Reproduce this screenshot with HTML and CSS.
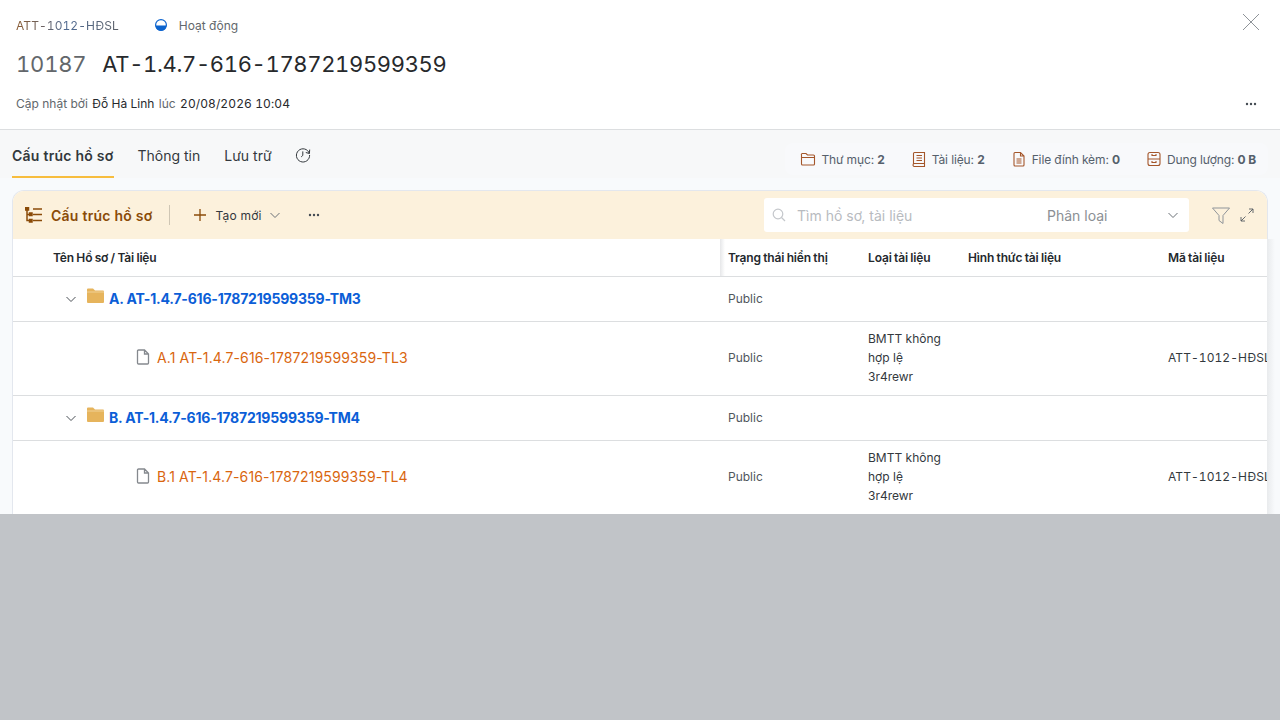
FILE: index.html
```html
<!DOCTYPE html>
<html lang="vi">
<head>
    <meta charset="UTF-8">
    <meta name="viewport" content="width=device-width, initial-scale=1.0">
    <title>AT-1.4.7-616-1787219599359</title>
    <link rel="stylesheet" href="styles.css">
</head>
<body>
    <div class="panel">
        <header class="head">
            <div class="head-top">
                <span class="code">ATT-1012-HĐSL</span>
                <span class="status">
                    <svg class="status-dot" width="12" height="12" viewBox="0 0 12 12"><circle cx="6" cy="6" r="5.4" fill="#fff" stroke="#0b63ce" stroke-width="1.2"/><path d="M.6 6.4h10.8A5.4 5.4 0 0 1 .6 6.4z" fill="#0b63ce"/></svg>
                    Hoạt động
                </span>
                <button class="close" aria-label="Đóng">
                    <svg width="18" height="18" viewBox="0 0 18 18"><path d="M1 1l16 16M17 1L1 17" stroke="#8f9499" stroke-width="1" fill="none"/></svg>
                </button>
            </div>
            <h1 class="title"><span class="title-id">10187</span><span class="title-name">AT-1.4.7-616-1787219599359</span></h1>
            <div class="head-meta">
                <p class="updated">Cập nhật bởi <b>Đỗ Hà Linh</b> lúc <b class="date">20/08/2026 10:04</b></p>
                <svg class="dots" width="12" height="4" viewBox="0 0 12 4"><g fill="#444b52"><circle cx="2" cy="2" r="1.2"/><circle cx="6" cy="2" r="1.2"/><circle cx="10" cy="2" r="1.2"/></g></svg>
            </div>
        </header>

        <section class="body">
            <div class="tabbar">
                <nav class="tabs">
                    <a href="#" class="tab active">Cấu trúc hồ sơ</a>
                    <a href="#" class="tab">Thông tin</a>
                    <a href="#" class="tab">Lưu trữ</a>
                    <a href="#" class="tab tab-icon" aria-label="Lịch sử">
                        <svg width="16" height="16" viewBox="0 0 16 16" fill="none" stroke="#33383d" stroke-width="1"><path d="M14.3 6.4A6.6 6.6 0 1 0 14.6 8M14.7 2.6l-.3 3.9-3.6-1M7.8 4.4v4l-1.6 1.5"/></svg>
                    </a>
                </nav>
                <ul class="stats">
                    <li><svg width="16" height="16" viewBox="0 0 16 16" fill="none" stroke="#a4562a" stroke-width="1.1"><path d="M1.500 4V13a1 1 0 0 0 1 1h11a1 1 0 0 0 1-1V5a1 1 0 0 0-1-1H7.500L6 2.500H2.500a1 1 0 0 0-1 1.500zM1.500 6.500h13"/></svg><span>Thư mục: <b>2</b></span></li>
                    <li><svg width="16" height="16" viewBox="0 0 16 16" fill="none" stroke="#a4562a" stroke-width="1.1"><path d="M2.500 12.500V2.500a1 1 0 0 1 1-1h10v11H3.500a1.500 1.500 0 0 0 0 3h10v-3M5.500 4.500h5.500M5.500 7h5.500M5.500 9.500h5.500"/></svg><span>Tài liệu: <b>2</b></span></li>
                    <li><svg width="16" height="16" viewBox="0 0 16 16" fill="none" stroke="#a4562a" stroke-width="1.1"><path d="M3 2.500a1 1 0 0 1 1-1h5.500L13 5v9a1 1 0 0 1-1 1H4a1 1 0 0 1-1-1zM9.500 1.500V5H13M5.500 8h5M5.500 10h5M5.500 12h5"/></svg><span>File đính kèm: <b>0</b></span></li>
                    <li><svg width="16" height="16" viewBox="0 0 16 16" fill="none" stroke="#a4562a" stroke-width="1.1"><rect x="2" y="1.500" width="12" height="13" rx="2"/><path d="M2 8h12M6 3v1.500h4V3M6 10v1.500h4V10"/></svg><span>Dung lượng: <b>0 B</b></span></li>
                </ul>
            </div>

            <div class="card">
                <div class="toolbar">
                    <svg class="tree-icon" width="18" height="16" viewBox="0 0 18 16" fill="none" stroke="#8a4b08" stroke-width="1.5"><path d="M2 1.500v12h3M2 7.500h3M8 2h9M8 7.500h9M8 13.500h9"/><rect x="4.500" y="6" width="2.500" height="2.500" fill="#8a4b08"/><rect x="4.500" y="12.500" width="2.500" height="2.500" fill="#8a4b08"/><rect x=".5" y=".5" width="3" height="2.500" fill="#8a4b08"/></svg>
                    <span class="toolbar-title">Cấu trúc hồ sơ</span>
                    <span class="divider"></span>
                    <button class="new-btn">
                        <svg width="14" height="14" viewBox="0 0 14 14"><path d="M7 1v12M1 7h12" stroke="#8a4b08" stroke-width="1.300"/></svg>
                        <span>Tạo mới</span>
                        <svg class="caret" width="12" height="12" viewBox="0 0 12 12" fill="none"><path d="M1.500 4l4.500 4.500L10.500 4" stroke="#6b7177" stroke-width="1"/></svg>
                    </button>
                    <svg class="dots" width="12" height="4" viewBox="0 0 12 4"><g fill="#444b52"><circle cx="2" cy="2" r="1.2"/><circle cx="6" cy="2" r="1.2"/><circle cx="10" cy="2" r="1.2"/></g></svg>
                    <div class="search">
                        <svg width="14" height="14" viewBox="0 0 14 14" fill="none" stroke="#c4c7cb" stroke-width="1.200"><circle cx="6" cy="6" r="4.800"/><path d="M9.500 9.500L13 13"/></svg>
                        <span class="search-text">Tìm hồ sơ, tài liệu</span>
                        <span class="search-type">Phân loại</span>
                        <svg class="search-caret" width="12" height="12" viewBox="0 0 12 12" fill="none"><path d="M1.500 4l4.500 4.500L10.500 4" stroke="#6b7177" stroke-width="1"/></svg>
                    </div>
                    <svg class="filter" width="18" height="17" viewBox="0 0 18 17" fill="none" stroke="#8f9499" stroke-width="1"><path d="M.5 1h17l-6.500 7.500v8l-4-3V8.500z"/></svg>
                    <svg class="expand" width="14" height="14" viewBox="0 0 14 14" fill="none" stroke="#555b61" stroke-width=".9"><path d="M1 13l4.500-4.500M8.500 5.500L13 1M9 1h4v4M1 9v4h4"/></svg>
                </div>

                <div class="table-wrap">
                    <table class="tree-table">
                        <colgroup>
                            <col class="col-name">
                            <col class="col-status">
                            <col class="col-type">
                            <col class="col-form">
                            <col class="col-code">
                        </colgroup>
                        <thead>
                            <tr>
                                <th class="th-name">Tên Hồ sơ / Tài liệu</th>
                                <th>Trạng thái hiển thị</th>
                                <th>Loại tài liệu</th>
                                <th>Hình thức tài liệu</th>
                                <th>Mã tài liệu</th>
                            </tr>
                        </thead>
                        <tbody>
                            <tr>
                                <td>
                                    <div class="folder-cell">
                                        <svg width="12" height="12" viewBox="0 0 12 12" fill="none"><path d="M1.500 4l4.500 4.500L10.500 4" stroke="#4a5056" stroke-width="1"/></svg>
                                        <svg class="folder" width="17" height="15" viewBox="0 0 17 15"><path d="M0 1.500A1 1 0 0 1 1 .5h5l2 2h8a1 1 0 0 1 1 1V14a1 1 0 0 1-1 1H1a1 1 0 0 1-1-1z" fill="#e6b45c"/><path d="M0 4h17" stroke="#f3d9a6" stroke-width=".8"/></svg>
                                        <a href="#" class="folder-name">A. AT-1.4.7-616-1787219599359-TM3</a>
                                    </div>
                                </td>
                                <td>Public</td><td></td><td></td><td></td>
                            </tr>
                            <tr class="file-row">
                                <td>
                                    <div class="file-cell">
                                        <svg width="14" height="16" viewBox="0 0 14 16" fill="none" stroke="#85898e" stroke-width="1.300"><path d="M1.500 2a1 1 0 0 1 1-1h6l4 4v9a1 1 0 0 1-1 1h-9a1 1 0 0 1-1-1zM8.500 1v4h4"/></svg>
                                        <a href="#" class="file-name">A.1 AT-1.4.7-616-1787219599359-TL3</a>
                                    </div>
                                </td>
                                <td>Public</td>
                                <td class="type-cell">BMTT không hợp lệ<br>3r4rewr</td>
                                <td></td>
                                <td class="doc-code">ATT-1012-HĐSL</td>
                            </tr>
                            <tr>
                                <td>
                                    <div class="folder-cell">
                                        <svg width="12" height="12" viewBox="0 0 12 12" fill="none"><path d="M1.500 4l4.500 4.500L10.500 4" stroke="#4a5056" stroke-width="1"/></svg>
                                        <svg class="folder" width="17" height="15" viewBox="0 0 17 15"><path d="M0 1.500A1 1 0 0 1 1 .5h5l2 2h8a1 1 0 0 1 1 1V14a1 1 0 0 1-1 1H1a1 1 0 0 1-1-1z" fill="#e6b45c"/><path d="M0 4h17" stroke="#f3d9a6" stroke-width=".8"/></svg>
                                        <a href="#" class="folder-name">B. AT-1.4.7-616-1787219599359-TM4</a>
                                    </div>
                                </td>
                                <td>Public</td><td></td><td></td><td></td>
                            </tr>
                            <tr class="file-row">
                                <td>
                                    <div class="file-cell">
                                        <svg width="14" height="16" viewBox="0 0 14 16" fill="none" stroke="#85898e" stroke-width="1.300"><path d="M1.500 2a1 1 0 0 1 1-1h6l4 4v9a1 1 0 0 1-1 1h-9a1 1 0 0 1-1-1zM8.500 1v4h4"/></svg>
                                        <a href="#" class="file-name">B.1 AT-1.4.7-616-1787219599359-TL4</a>
                                    </div>
                                </td>
                                <td>Public</td>
                                <td class="type-cell">BMTT không hợp lệ<br>3r4rewr</td>
                                <td></td>
                                <td class="doc-code">ATT-1012-HĐSL</td>
                            </tr>
                        </tbody>
                    </table>
                </div>
            </div>
        </section>
    </div>
</body>
</html>
```

FILE: styles.css
```css
* {
    box-sizing: border-box;
}

html, body {
    height: 100%;
}

body {
    margin: 0;
    background: #c1c4c8;
    font-family: Inter, 'Noto Sans', sans-serif;
    color: #24292e;
    overflow: hidden;
}

.panel {
    height: 514px;
    background: #f8fafc;
    overflow: hidden;
}

/* header */
.head {
    height: 130px;
    background: #fff;
    border-bottom: 1px solid #dcdee0;
    padding: 0 16px;
}

.head-top {
    display: flex;
    align-items: center;
    height: 50px;
    font-size: 12px;
}

.code {
    letter-spacing: 0.07px;
    font-variant-numeric: tabular-nums;
    background: linear-gradient(to right, #8a5a30, #4f6a92 50%, #5a5f66);
    -webkit-background-clip: text;
    background-clip: text;
    color: transparent;
}

.status {
    display: flex;
    align-items: center;
    gap: 12px;
    margin-left: 36px;
    color: #62676c;
}

.close {
    margin-left: auto;
    margin-right: 4px;
    margin-top: -6px;
    padding: 0;
    border: none;
    background: none;
    display: flex;
}

.title {
    display: flex;
    gap: 16px;
    margin: 0;
    font-size: 22px;
    line-height: 28px;
    font-weight: 400;
    font-variant-numeric: tabular-nums;
    color: #27292c;
}

.title-id {
    letter-spacing: -0.2px;
    color: #63676b;
}

.title-name {
    letter-spacing: -0.35px;
}

.head-meta {
    display: flex;
    justify-content: space-between;
    align-items: center;
    margin-top: 18px;
}

.updated {
    margin: 0;
    font-size: 12px;
    color: #62676c;
}

.updated b {
    font-weight: 400;
    color: #27292c;
    margin: 0 1px;
}

.updated .date {
    font-variant-numeric: tabular-nums;
    letter-spacing: 0.1px;
}

.head-meta .dots {
    margin-right: 7px;
}

/* tabs */
.body {
    padding: 0 12px;
}

.tabbar {
    display: flex;
    justify-content: space-between;
    height: 60px;
    margin: 0 -12px;
    padding: 0 12px;
    background: linear-gradient(#f7f8f9 48px, #f8fafc 48px);
}

.tabs {
    display: flex;
    gap: 24px;
    height: 48px;
}

.tab {
    display: flex;
    align-items: center;
    height: 48px;
    padding-top: 4px;
    font-size: 14px;
    color: #33383d;
    text-decoration: none;
    border-bottom: 2px solid transparent;
}

.tab.active {
    font-weight: 600;
    letter-spacing: 0.25px;
    border-bottom-color: #f7bd3e;
}

.tab-icon {
    padding-top: 0;
    margin-top: 2px;
    margin-left: -1px;
}

.stats {
    display: flex;
    align-items: center;
    gap: 26px;
    height: 32px;
    margin: 13px 0 0;
    padding: 0 12px 0 15px;
    list-style: none;
    background: #f8f9fb;
    border-radius: 8px;
    font-size: 12px;
    letter-spacing: -0.12px;
    color: #55606b;
}

.stats li {
    display: flex;
    align-items: center;
    gap: 5px;
}

.stats b {
    font-weight: 700;
}

/* card */
.card {
    height: 325px;
    background: #fff;
    border: 1px solid #e3e7ee;
    border-bottom: none;
    border-radius: 12px 12px 0 0;
    position: relative;
}

.card::after {
    content: '';
    position: absolute;
    top: 48px;
    left: 100%;
    bottom: 0;
    width: 8px;
    background: linear-gradient(to right, #e9ebed, #f8fafc);
}

.toolbar {
    display: flex;
    align-items: center;
    height: 48px;
    padding: 0 13px 0 12px;
    background: #fcf1dc;
    border-radius: 11px 11px 0 0;
}

.toolbar-title {
    margin-left: 8px;
    font-size: 14px;
    font-weight: 600;
    letter-spacing: 0.25px;
    color: #8a4b08;
}

.divider {
    width: 1px;
    height: 20px;
    margin: 0 23px 0 16px;
    background: #cfc6b4;
}

.new-btn {
    display: flex;
    align-items: center;
    gap: 9px;
    padding: 0;
    border: none;
    background: none;
    font: inherit;
    font-size: 12px;
    letter-spacing: 0.2px;
    color: #33383d;
}

.new-btn .caret {
    margin-left: -2px;
}

.toolbar > .dots {
    margin-left: 27px;
}

.search {
    display: flex;
    align-items: center;
    width: 425px;
    height: 34px;
    margin-left: auto;
    padding: 0 10px 0 8px;
    background: #fff;
    border-radius: 3px;
    font-size: 14px;
}

.search-text {
    width: 250px;
    margin-left: 11px;
    color: #b8bbbf;
}

.search-type {
    color: #8b8f94;
}

.search-caret {
    margin-left: auto;
}

.filter {
    margin-left: 23px;
}

.expand {
    margin-left: 10px;
}

/* table */
.table-wrap {
    overflow: hidden;
}

.tree-table {
    width: 1400px;
    table-layout: fixed;
    border-collapse: collapse;
    font-size: 12px;
    color: #50565c;
}

.col-name { width: 707px; }
.col-status { width: 140px; }
.col-type { width: 100px; }
.col-form { width: 200px; }
.col-code { width: 253px; }

.tree-table th {
    height: 37px;
    padding: 0 8px;
    text-align: left;
    font-weight: 600;
    letter-spacing: -0.15px;
    word-spacing: -0.5px;
    color: #24292e;
    border-bottom: 1px solid #dcdee0;
}

.tree-table th:nth-child(2) {
    background: linear-gradient(to right, #e6e7e9, #fff 5px);
}

.tree-table .th-name {
    padding-left: 40px;
}

.tree-table td {
    height: 45px;
    padding: 0 8px;
    border-bottom: 1px solid #dcdee0;
}

.tree-table .file-row td {
    padding-bottom: 2px;
}

.tree-table td:first-child {
    padding-left: 0;
}

.folder-cell {
    display: flex;
    align-items: center;
    padding-left: 52px;
}

.folder {
    margin: -6px 0 0 10px;
}

.folder-name {
    margin-left: 5px;
    font-size: 14px;
    font-weight: 700;
    letter-spacing: -0.2px;
    color: #0b5ed7;
    text-decoration: none;
}

.file-cell {
    display: flex;
    align-items: center;
    padding-left: 123px;
}

.file-name {
    margin-left: 7px;
    font-size: 14px;
    letter-spacing: 0.12px;
    color: #d9660f;
    text-decoration: none;
}

.tree-table .file-row .type-cell {
    height: 74px;
    padding: 7px 8px 0;
    vertical-align: top;
    line-height: 19px;
    color: #33383d;
}

.doc-code {
    letter-spacing: 0.07px;
    font-variant-numeric: tabular-nums;
    color: #33383d;
    white-space: nowrap;
}
```
